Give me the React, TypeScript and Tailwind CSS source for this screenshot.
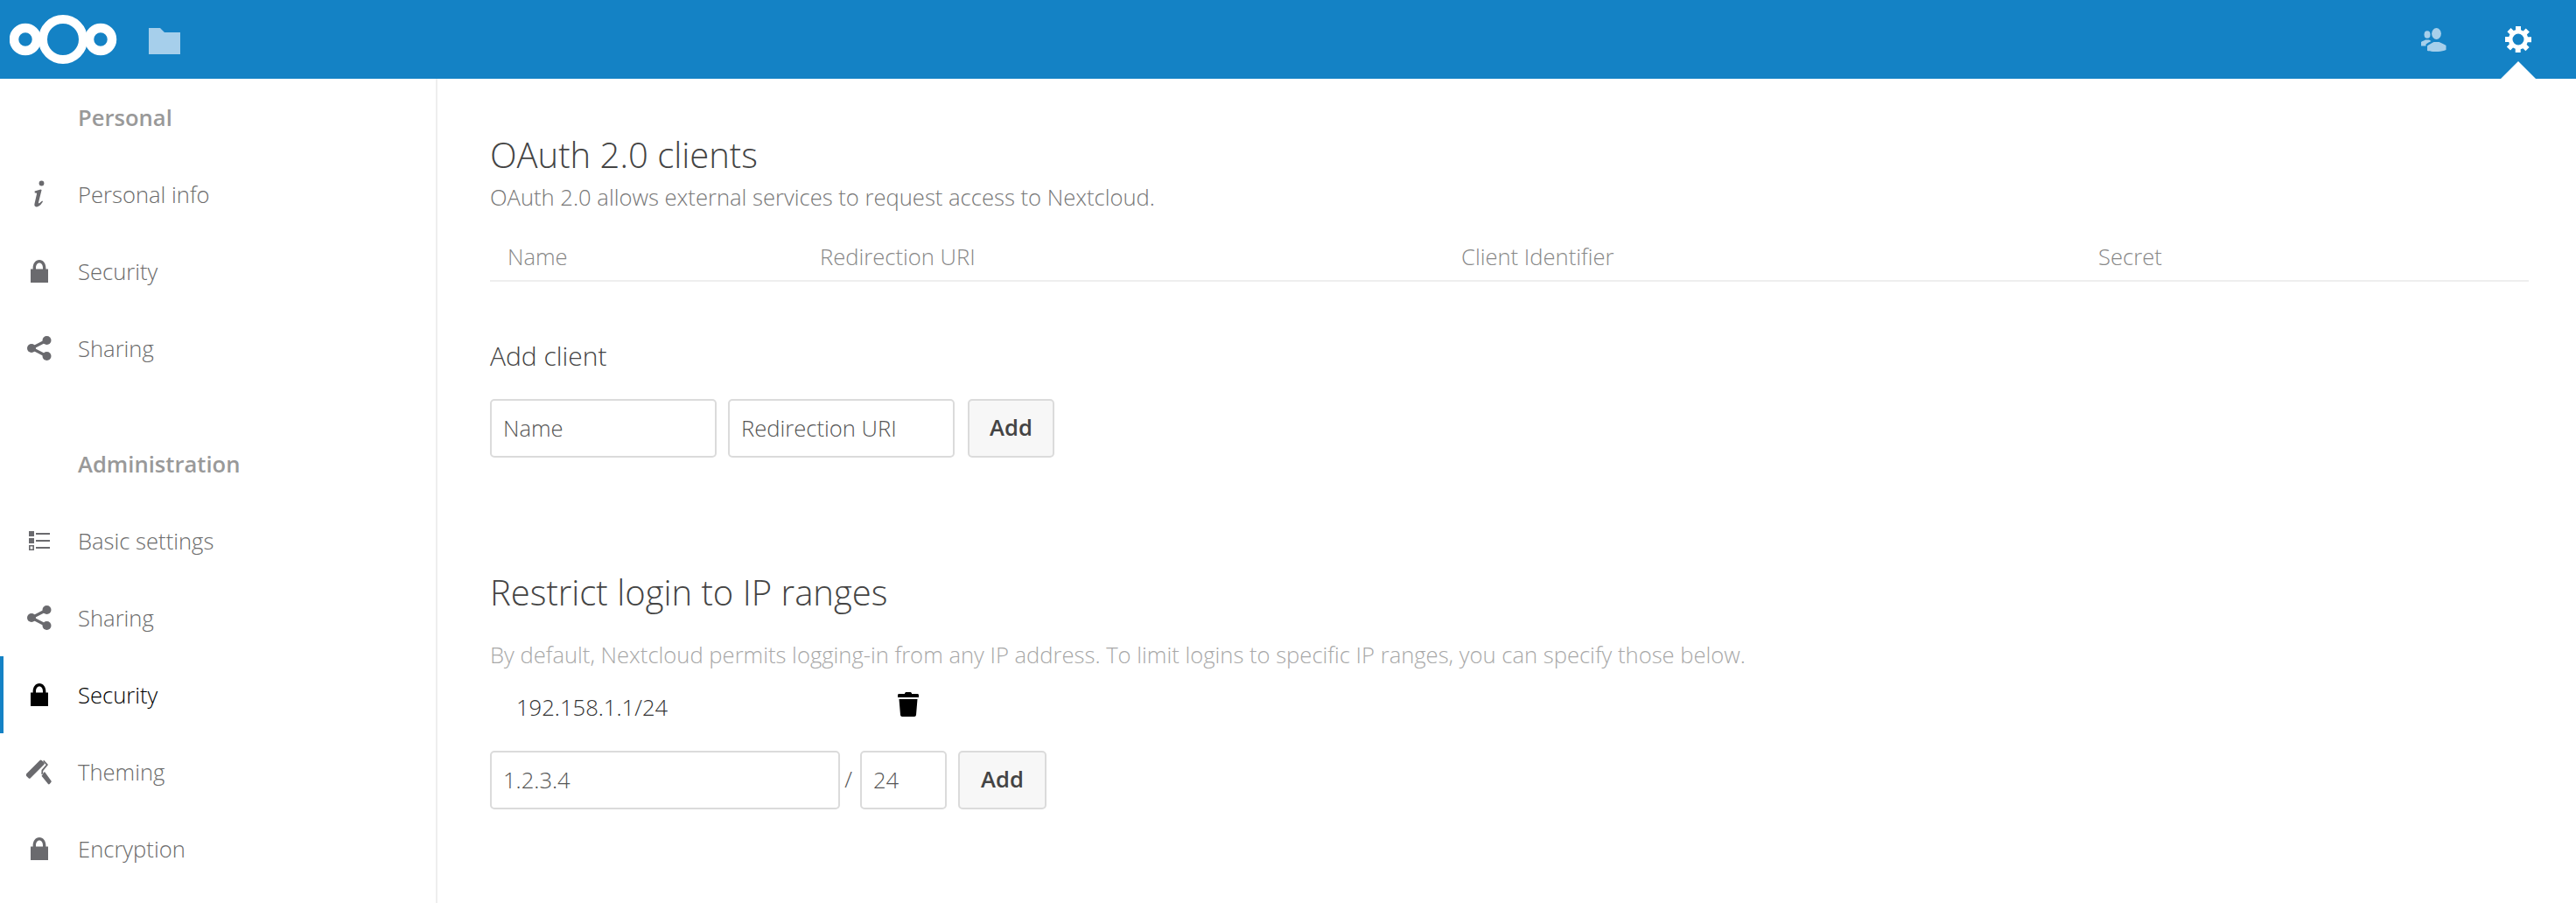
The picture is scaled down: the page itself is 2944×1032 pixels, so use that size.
import React from "react";

const Lock = ({ color }: { color: string }) => (
  <svg width="20" height="26" viewBox="0 0 20 26" className="shrink-0">
    <path fill={color} d="M0 10.500h2.600V9.600C2.600 4 5.600 0 10 0s7.400 4 7.400 9.600v.9H20V26H0zM6 10.500h8V9.400C14 6 12.600 3.600 10 3.600S6 6 6 9.400z" />
  </svg>
);
const Share = () => (
  <svg width="28" height="28" viewBox="0 0 28 28" className="shrink-0">
    <g fill="#6a6a6e">
      <circle cx="5" cy="14" r="5" />
      <circle cx="22.500" cy="5" r="5" />
      <circle cx="22.500" cy="23" r="5" />
    </g>
    <path d="M5 14 22.500 5M5 14l17.500 9" stroke="#6a6a6e" strokeWidth="3.200" fill="none" />
  </svg>
);
const Info = () => (
  <svg width="14" height="32" viewBox="0 0 14 32" className="shrink-0">
    <circle cx="9.500" cy="3.500" r="2.900" fill="#6a6a6e" />
    <path fill="#6a6a6e" d="M1.600 12.600 8.400 10.400 9.600 11 6 25.400c-.2 1 .5 1.200 1.200.7l3-2.600.8.8C9.200 27.600 6.600 30.400 3.800 30.400 1.600 30.400 1 28.900 1.500 26.800L4 15.800c.2-1-.5-1.400-2.200-1.200z" />
  </svg>
);
const ListIcon = () => (
  <svg width="24" height="22" viewBox="0 0 24 22" className="shrink-0">
    <g fill="#6a6a6e">
      <rect x="0" y="0" width="6" height="6" />
      <rect x="0" y="8" width="6" height="6" />
      <path d="M0 16h6v6H0zm1.600 1.600v2.800h2.800v-2.800z" fillRule="evenodd" />
      <rect x="8" y="2" width="16" height="2" />
      <rect x="8" y="10" width="16" height="2" />
      <rect x="8" y="18" width="16" height="2" />
    </g>
  </svg>
);
const Roller = () => (
  <svg width="29" height="29" viewBox="0 0 29 29" className="shrink-0">
    <g fill="#6a6a6e">
      <path d="M0 16.500 15.500 1c.7-.7 1.600-.7 2.200 0l2.600 2.600c.7.7.7 1.600 0 2.200L4.800 21.300c-.7.7-1.500.7-2.200 0L0 18.700c-.5-.6-.5-1.600 0-2.200z" />
      <path d="M20 .5 25 6 19.200 13l-.1 3.600-1.800.4.2-4.900 5.200-6.200-3.500-3.700z" />
      <path d="M19.500 15.500 21 14l7.400 10.300c.5.6.4 1.200 0 1.700l-1.700 2c-.5.5-1.200.5-1.700 0l-7.500-9.200 1.200-1.500z" />
    </g>
  </svg>
);
const Logo = () => (
  <svg width="124" height="60" viewBox="0 0 124 60" className="shrink-0">
    <g fill="none" stroke="#fff">
      <circle cx="18" cy="30" r="13" strokeWidth="10.500" />
      <circle cx="61" cy="30" r="23" strokeWidth="10" />
      <circle cx="104" cy="30" r="13" strokeWidth="10.500" />
    </g>
  </svg>
);
const Folder = () => (
  <svg width="36" height="30" viewBox="0 0 36 30" className="shrink-0">
    <path fill="#a6cfeb" d="M0 0h13l5 5h18v25H0z" />
  </svg>
);
const Contacts = () => (
  <svg width="29" height="27" viewBox="0 0 29 27" className="shrink-0">
    <g fill="#a6cfeb">
      <ellipse cx="17.500" cy="6.500" rx="5.400" ry="6.500" />
      <path d="M7 26V20.500c2-1.800 5-3 7.500-4.500h6c3 1.500 6 2.500 8 4V25c-5 2.600-16 2.600-21.500 1z" />
      <ellipse cx="7" cy="7.500" rx="3.500" ry="4.300" />
      <path d="M0 20.500v-4.500c1.500-1 3-1.500 5-2.500h4l2.500 1.600C9 16.500 7 17.500 5.500 18.500v2z" />
    </g>
  </svg>
);
const Gear = () => (
  <svg width="30" height="30" viewBox="0 0 30 30" className="shrink-0">
    <path
      fill="#fff"
      fillRule="evenodd"
      d="M12 0h6v4.300l2.700 1.100 3-3 4.200 4.200-3 3 1.100 2.700H30v6h-4.300l-1.100 2.700 3 3-4.200 4.200-3-3-2.700 1.100V30h-6v-4.300l-2.700-1.100-3 3-4.200-4.200 3-3L4.300 18H0v-6h4.300l1.100-2.700-3-3 4.200-4.200 3 3L12 4.300zM15 8.500a6.500 6.500 0 1 0 0 13 6.500 6.500 0 0 0 0-13z"
    />
  </svg>
);
const Trash = () => (
  <svg width="24" height="28" viewBox="0 0 24 28" className="shrink-0">
    <path fill="#000" d="M8 1.500C8 .6 9 0 10 0h4c1 0 2 .6 2 1.500V2h6.500C23.400 2 24 2.600 24 3.500V6H0V3.500C0 2.600.6 2 1.500 2H8zM1.500 8h21L21 26c-.1 1.200-1 2-2 2H5c-1 0-1.900-.8-2-2z" />
  </svg>
);

const NavRow = ({ icon, label, active }: { icon?: React.ReactNode; label: string; active?: boolean }) => (
  <div className={`h-[88px] flex items-center ${active ? "border-l-4 border-[#1482c5]" : ""}`}>
    <div className={`${active ? "w-[85px] pr-[4px]" : "w-[89px]"} flex justify-center shrink-0`}>{icon}</div>
    <span className={`pt-[2px] text-[25.6px] font-light ${active ? "text-black" : "text-[#6b6b6b]"}`}>{label}</span>
  </div>
);

const GroupTitle = ({ label }: { label: string }) => (
  <div className="h-[88px] flex items-center pl-[89px] pt-[2px] text-[25.6px] font-semibold text-[#999999]">{label}</div>
);

const Field = ({ placeholder, w }: { placeholder: string; w: string }) => (
  <input
    placeholder={placeholder}
    className={`${w} h-[67px] shrink-0 rounded-[5px] border-2 border-[#dbdbdb] bg-white px-[13px] text-[25.6px] font-light text-[#555] placeholder:text-[#555555] outline-none`}
  />
);
const AddBtn = ({ w }: { w: string }) => (
  <button className={`${w} h-[67px] shrink-0 rounded-[5px] border-2 border-[#dbdbdb] bg-[#f7f7f7] text-[25.6px] font-semibold text-[#444]`}>Add</button>
);

export default function App() {
  return (
    <div className="h-[1032px] w-[2944px] overflow-hidden bg-white flex flex-col font-['Open_Sans',sans-serif]">
      <header className="h-[90px] shrink-0 bg-[#1482c5] flex items-center pl-[11px] pr-[51px] relative">
        <Logo />
        <div className="ml-[35px] mt-[4px] flex">
          <Folder />
        </div>
        <div className="ml-auto flex items-center gap-[67px]">
          <Contacts />
          <Gear />
        </div>
        <div className="absolute right-[46px] bottom-0 w-0 h-0 border-l-[20px] border-r-[20px] border-b-[20px] border-l-transparent border-r-transparent border-b-white" />
      </header>
      <div className="flex flex-1 min-h-0">
        <aside className="w-[500px] shrink-0 border-r-2 border-[#eeeeee]">
          <GroupTitle label="Personal" />
          <NavRow icon={<Info />} label="Personal info" />
          <NavRow icon={<Lock color="#6a6a6e" />} label="Security" />
          <NavRow icon={<Share />} label="Sharing" />
          <div className="mt-[44px]">
            <GroupTitle label="Administration" />
            <NavRow icon={<ListIcon />} label="Basic settings" />
            <NavRow icon={<Share />} label="Sharing" />
            <NavRow active icon={<Lock color="#000" />} label="Security" />
            <NavRow icon={<Roller />} label="Theming" />
            <NavRow icon={<Lock color="#6a6a6e" />} label="Encryption" />
          </div>
        </aside>
        <main className="flex-1 pl-[60px] pr-[54px] pt-[61px]">
          <h2 className="text-[40px] leading-[52px] font-light text-[#444]">OAuth 2.0 clients</h2>
          <p className="mt-[5px] text-[25.6px] leading-[36px] font-light text-[#777]">OAuth 2.0 allows external services to request access to Nextcloud.</p>
          <div className="mt-[25px] flex h-[53px] items-center border-b-2 border-[#eeeeee] pl-[20px] text-[25.6px] font-light text-[#888]">
            <span className="w-[357px]">Name</span>
            <span className="w-[733px]">Redirection URI</span>
            <span className="w-[728px]">Client Identifier</span>
            <span>Secret</span>
          </div>
          <h3 className="mt-[65px] text-[30px] leading-[40px] font-light text-[#444]">Add client</h3>
          <div className="mt-[29px] flex items-center">
            <Field placeholder="Name" w="w-[259px]" />
            <div className="w-[13px]" />
            <Field placeholder="Redirection URI" w="w-[259px]" />
            <div className="w-[15px]" />
            <AddBtn w="w-[99px]" />
          </div>
          <h2 className="mt-[127px] text-[40px] leading-[54px] font-light text-[#444]">Restrict login to IP ranges</h2>
          <p className="mt-[27px] text-[25.6px] leading-[36px] font-light text-[#a8a8a8]">By default, Nextcloud permits logging-in from any IP address. To limit logins to specific IP ranges, you can specify those below.</p>
          <div className="mt-[20px] flex h-[44px] items-center pl-[30px] text-[25.6px] font-light text-[#333]">
            <span className="w-[437px]">192.158.1.1/24</span>
            <span className="-mt-[8px] -ml-[1px]"><Trash /></span>
          </div>
          <div className="mt-[27px] flex items-center">
            <Field placeholder="1.2.3.4" w="w-[400px]" />
            <span className="w-[23px] pr-[4px] text-center text-[25.6px] font-light text-[#555]">/</span>
            <Field placeholder="24" w="w-[99px]" />
            <div className="w-[13px]" />
            <AddBtn w="w-[101px]" />
          </div>
        </main>
      </div>
    </div>
  );
}
